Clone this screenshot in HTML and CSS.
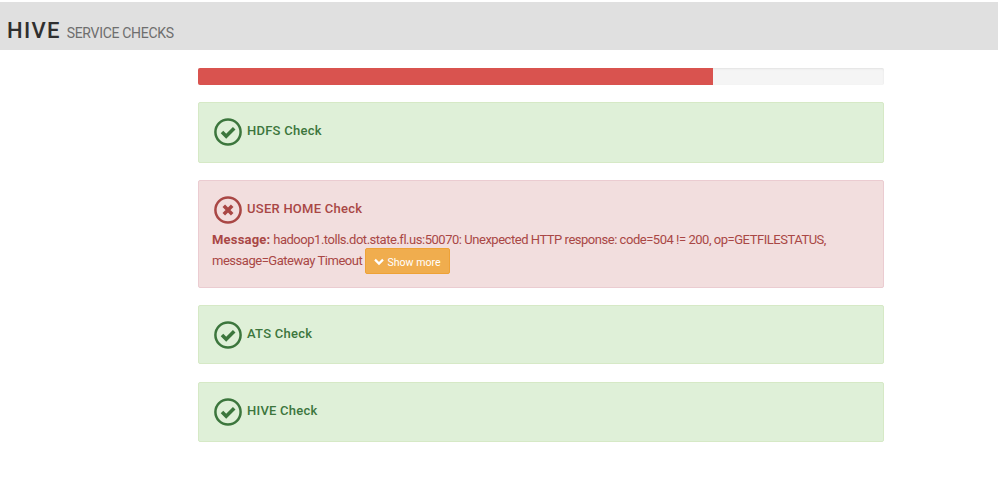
FILE: index.html
```html
<!DOCTYPE html>
<html lang="en">
<head>
<meta charset="utf-8">
<title>Hive Service Checks</title>
<link rel="stylesheet" href="styles.css">
</head>
<body>
<header class="top">
  <span class="brand">HIVE</span>
  <span class="sub">SERVICE CHECKS</span>
</header>
<main class="checks">
  <div class="progress"><div class="progress-bar" style="width:75%"></div></div>

  <section class="alert ok h61">
    <div class="title">
      <svg class="ico" viewBox="0 0 28 28"><circle cx="14" cy="14" r="12.6" fill="none" stroke="currentColor" stroke-width="2.5"/><path d="M8 14l4.2 4.2 8-8" fill="none" stroke="currentColor" stroke-width="3.6"/></svg>
      <span class="label">HDFS Check</span>
    </div>
  </section>

  <section class="alert bad">
    <div class="title">
      <svg class="ico" viewBox="0 0 28 28"><circle cx="14" cy="14" r="12.6" fill="none" stroke="currentColor" stroke-width="2.5"/><path d="M9.8 9.8l8.4 8.4M18.2 9.8l-8.4 8.4" fill="none" stroke="currentColor" stroke-width="3.6"/></svg>
      <span class="label">USER HOME Check</span>
    </div>
    <p class="msg"><strong>Message:</strong> hadoop1.tolls.dot.state.fl.us:50070: Unexpected HTTP response: code=504 != 200, op=GETFILESTATUS, message=Gateway Timeout <button class="more"><svg class="chev" viewBox="0 0 10 8"><path d="M1 1.6l4 4 4-4" fill="none" stroke="currentColor" stroke-width="2.2"/></svg>Show more</button></p>
  </section>

  <section class="alert ok h59">
    <div class="title">
      <svg class="ico" viewBox="0 0 28 28"><circle cx="14" cy="14" r="12.6" fill="none" stroke="currentColor" stroke-width="2.5"/><path d="M8 14l4.2 4.2 8-8" fill="none" stroke="currentColor" stroke-width="3.6"/></svg>
      <span class="label">ATS Check</span>
    </div>
  </section>

  <section class="alert ok h60">
    <div class="title">
      <svg class="ico" viewBox="0 0 28 28"><circle cx="14" cy="14" r="12.6" fill="none" stroke="currentColor" stroke-width="2.5"/><path d="M8 14l4.2 4.2 8-8" fill="none" stroke="currentColor" stroke-width="3.6"/></svg>
      <span class="label">HIVE Check</span>
    </div>
  </section>
</main>
</body>
</html>
```
FILE: styles.css
```css
* { box-sizing: border-box; }
html, body { margin: 0; background: #fff; }
body { font-family: Roboto, "Liberation Sans", sans-serif; color: #333; }

.top {
  margin-top: 2px;
  height: 48px;
  background: #e0e0e0;
  display: flex;
  align-items: baseline;
  padding: 15px 0 0 7px;
}
.brand { font-size: 22px; font-weight: 500; letter-spacing: 1.3px; color: #2f2f2f; line-height: 27px; }
.sub { font-size: 14px; letter-spacing: -.3px; color: #6e6e6e; margin-left: 6px; }

.checks {
  width: 686px;
  margin-left: 198px;
  padding-top: 18px;
  display: flex;
  flex-direction: column;
  gap: 17px;
}
.progress {
  height: 17px;
  background: #f5f5f5;
  border-radius: 2px;
  box-shadow: inset 0 1px 2px rgba(0,0,0,.08);
  overflow: hidden;
}
.progress-bar { height: 100%; background: #d9534f; }

.alert {
  border: 1px solid;
  border-radius: 2px;
  padding: 14px 13px;
}
.ok { background: #dff0d8; border-color: #d6e9c6; color: #3c763d; }
.bad { background: #f2dede; border-color: #ebccd1; color: #a94745; height: 108px; }
.h61 { height: 61px; }
.h59 { height: 59px; }
.h60 { height: 60px; margin-top: 1px; }
.title {
  display: flex;
  align-items: center;
  gap: 5px;
  font-size: 13px;
  font-weight: 500;
  letter-spacing: .25px;
  padding-left: 2px;
  height: 29px;
}
.label { margin-top: -3px; }
.ico { width: 28px; height: 28px; flex: none; }
.msg { margin: 5px 0 0; font-size: 13px; line-height: 21px; letter-spacing: -.47px; }
.msg strong { font-weight: 700; letter-spacing: .2px; }
.more {
  display: inline-block;
  vertical-align: middle;
  height: 26px;
  width: 85px;
  margin: -3px 0 -2px;
  padding: 2px 0 0;
  border: 1px solid #eea236;
  border-radius: 2px;
  background: #f0ad4e;
  color: #fff;
  font: 400 10.6px Roboto, sans-serif;
}
.chev { width: 10px; height: 8px; margin-right: 3px; }
```
